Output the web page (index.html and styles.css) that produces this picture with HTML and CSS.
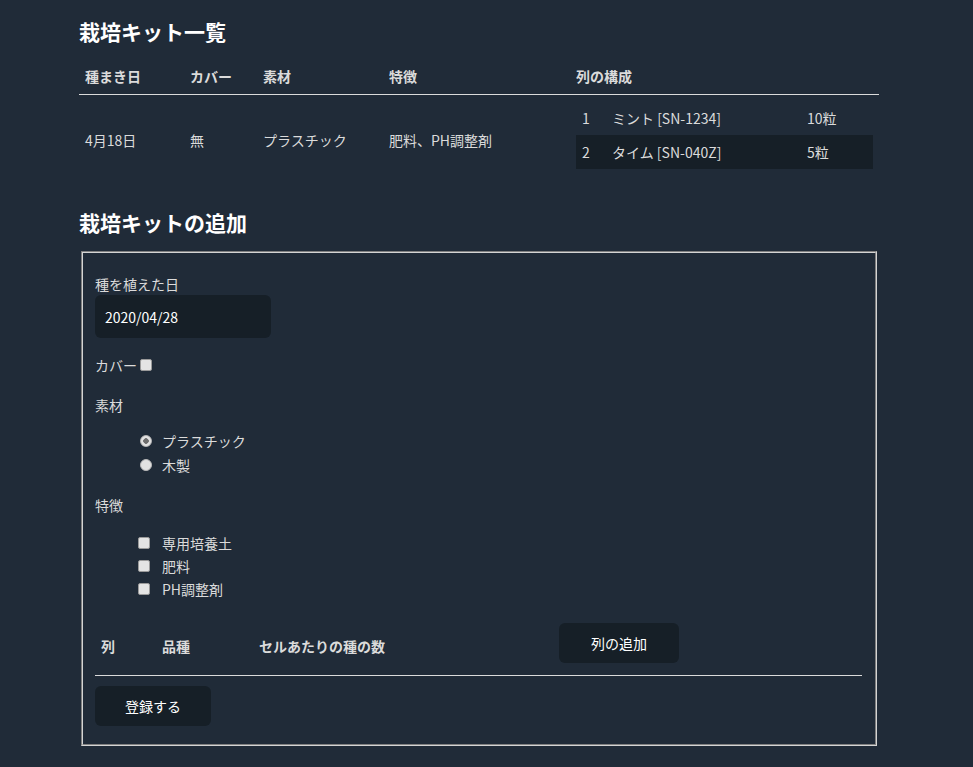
FILE: index.html
```html
<!DOCTYPE html>
<html lang="ja">
<head>
<meta charset="utf-8">
<title>栽培キット</title>
<link rel="stylesheet" href="styles.css">
</head>
<body>
<main class="page">
  <h2 class="title title-first">栽培キット一覧</h2>
  <table class="kits">
    <colgroup>
      <col class="c1"><col class="c2"><col class="c3"><col class="c4"><col>
    </colgroup>
    <thead>
      <tr><th>種まき日</th><th>カバー</th><th>素材</th><th>特徴</th><th>列の構成</th></tr>
    </thead>
    <tbody>
      <tr>
        <td>4月18日</td>
        <td>無</td>
        <td>プラスチック</td>
        <td>肥料、PH調整剤</td>
        <td class="nested-cell">
          <table class="rows">
            <colgroup><col class="r1"><col class="r2"><col></colgroup>
            <tbody>
              <tr><td>1</td><td>ミント [SN-1234]</td><td>10粒</td></tr>
              <tr class="even"><td>2</td><td>タイム [SN-040Z]</td><td>5粒</td></tr>
            </tbody>
          </table>
        </td>
      </tr>
    </tbody>
  </table>

  <h2 class="title title-second">栽培キットの追加</h2>
  <fieldset class="form">
    <div class="f-date">
      <label class="lbl-block" for="date">種を植えた日</label>
      <input class="text-input" id="date" type="text" value="2020/04/28">
    </div>
    <div class="f-cover">
      <label for="cover">カバー</label>
      <input class="chk" id="cover" type="checkbox">
    </div>
    <div class="f-head f-material">素材</div>
    <ul class="opts opts-radio">
      <li><input class="rad" type="radio" name="mat" checked><span>プラスチック</span></li>
      <li><input class="rad" type="radio" name="mat"><span>木製</span></li>
    </ul>
    <div class="f-head f-feature">特徴</div>
    <ul class="opts opts-check">
      <li><input class="chk" type="checkbox"><span>専用培養土</span></li>
      <li><input class="chk" type="checkbox"><span>肥料</span></li>
      <li><input class="chk" type="checkbox"><span>PH調整剤</span></li>
    </ul>
    <table class="cols">
      <colgroup><col class="k1"><col class="k2"><col class="k3"><col></colgroup>
      <thead>
        <tr><th>列</th><th>品種</th><th>セルあたりの種の数</th><th><button class="btn" type="button">列の追加</button></th></tr>
      </thead>
    </table>
    <button class="btn" type="button">登録する</button>
  </fieldset>
</main>
</body>
</html>
```

FILE: styles.css
```css
html {
  background: #202b38;
}
body {
  margin: 0;
  background: #202b38;
  color: #dbdbdb;
  font-family: "Noto Sans CJK JP", "Noto Sans", sans-serif;
  font-size: 14px;
  line-height: 22px;
}
.page {
  width: 800px;
  margin: 0 0 0 79px;
  padding: 16px 0 20px;
}
.title {
  color: #ffffff;
  font-size: 21px;
  line-height: 30px;
  font-weight: 700;
  margin: 0;
}
.title-second {
  margin-top: 22px;
}
table {
  border-collapse: collapse;
  width: 100%;
  table-layout: fixed;
}
.kits {
  margin-top: 17px;
  margin-bottom: 10px;
}
.kits col.c1 { width: 105px; }
.kits col.c2 { width: 73px; }
.kits col.c3 { width: 126px; }
.kits col.c4 { width: 187px; }
th {
  text-align: left;
  font-weight: 700;
  color: #dbdbdb;
}
.kits th {
  padding: 4px 6px 8px;
  line-height: 19px;
}
.kits thead {
  border-bottom: 1px solid #dbdbdb;
}
.kits td {
  padding: 6px;
  vertical-align: middle;
}
.rows {
  margin-bottom: 10px;
}
.rows col.r1 { width: 30px; }
.rows col.r2 { width: 195px; }
.rows td {
  padding: 6px;
}
.rows tr.even {
  background: #161f27;
}
.form {
  margin: 14px 2px 0;
  padding: 0 12px 12px 12px;
  border: 2px groove #d4d4d4;
}
.f-date {
  margin-top: 21px;
}
.lbl-block {
  display: block;
  line-height: 21px;
}
.text-input {
  display: block;
  box-sizing: border-box;
  width: 176px;
  height: 43px;
  margin: 0;
  padding: 10px;
  border: none;
  border-radius: 6px;
  background: #161f27;
  color: #ffffff;
  font: inherit;
  outline: none;
}
.f-cover {
  margin-top: 16px;
  display: flex;
  align-items: center;
  height: 22px;
}
.f-cover .chk {
  margin-left: 3px;
}
.f-material {
  margin-top: 18px;
}
.f-feature {
  margin-top: 17px;
}
.opts {
  list-style: none;
  margin: 0;
  padding-left: 39px;
}
.opts-radio {
  margin-top: 13px;
}
.opts-radio li {
  height: 24px;
  display: flex;
  align-items: center;
}
.opts-check {
  margin-top: 15px;
}
.opts-check li {
  height: 23px;
  display: flex;
  align-items: center;
}
.opts li span {
  margin-left: 10px;
}
.opts-check li span {
  margin-left: 12px;
}
.chk {
  appearance: none;
  -webkit-appearance: none;
  box-sizing: border-box;
  width: 12px;
  height: 12px;
  margin: 0 0 0 4px;
  background: #e4e4e4;
  border: 1px solid #9a9a9a;
  border-radius: 2px;
}
.rad {
  appearance: none;
  -webkit-appearance: none;
  box-sizing: border-box;
  width: 12px;
  height: 12px;
  margin: 0 0 0 6px;
  border-radius: 50%;
  background: #e2e2e2;
  border: 1px solid #b8b8b8;
}
.rad:checked {
  background: radial-gradient(circle, #6e6e6e 0 2.5px, #e2e2e2 3px);
}
.cols {
  margin-top: 17px;
  margin-bottom: 10px;
  width: 767px;
}
.cols col.k1 { width: 61px; }
.cols col.k2 { width: 97px; }
.cols col.k3 { width: 300px; }
.cols thead {
  border-bottom: 1px solid #dbdbdb;
}
.cols th {
  padding: 6px;
  line-height: 20px;
  vertical-align: middle;
}
.btn {
  display: inline-block;
  margin: 0 6px 6px 0;
  padding: 9px 32px;
  height: 40px;
  box-sizing: border-box;
  border: none;
  border-radius: 6px;
  background: #161f27;
  color: #ffffff;
  font: inherit;
  font-weight: 400;
  line-height: 22px;
  cursor: pointer;
}
.form > .btn {
  padding: 9px 30px;
}
```
